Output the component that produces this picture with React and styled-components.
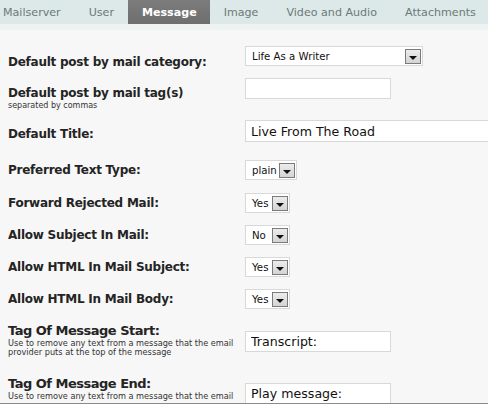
import React from "react";
import styled, { createGlobalStyle } from "styled-components";

const Global = createGlobalStyle`
  html, body { margin: 0; padding: 0; background: #f7f7f7; }
  body { font-family: "DejaVu Sans", Verdana, sans-serif; width: 488px; height: 406px; overflow: hidden; }
`;

const Page = styled.div`
  width: 488px;
  height: 406px;
  display: flex;
  flex-direction: column;
  background: #f7f7f7;
  overflow: hidden;
`;

const TabBar = styled.div`
  height: 24px;
  display: flex;
  align-items: stretch;
  background: #dde9e8;
  border-bottom: 6px solid #eef3f2;
  flex-shrink: 0;
`;

const Tab = styled.div`
  display: flex;
  align-items: center;
  padding: 0 ${(p) => (p.$active ? 13 : 14)}px 0 14px;
  font-size: 11.1px;
  color: ${(p) => (p.$active ? "#ffffff" : "#6b7978")};
  font-weight: ${(p) => (p.$active ? "bold" : "normal")};
  background: ${(p) => (p.$active ? "linear-gradient(#7c7c7c, #6e6e6e)" : "transparent")};
  white-space: nowrap;
  &:first-child {
    padding-left: 3px;
  }
`;

const Form = styled.div`
  padding-top: 16px;
  display: flex;
  flex-direction: column;
  flex: 1;
  overflow: hidden;
`;

const Row = styled.div`
  display: grid;
  grid-template-columns: 237px 1fr;
  padding-left: 8px;
  height: ${(p) => p.$h}px;
  flex-shrink: 0;
`;

const LabelCell = styled.div`
  margin-top: ${(p) => p.$top}px;
  color: #242424;
`;

const Label = styled.div`
  font-size: ${(p) => (p.$big ? 13 : 12)}px;
  letter-spacing: ${(p) => (p.$big ? -0.5 : -0.25)}px;
  font-weight: bold;
  line-height: ${(p) => (p.$big ? 16 : 15)}px;
  white-space: nowrap;
`;

const Help = styled.div`
  font-size: ${(p) => p.$size || 8.2}px;
  line-height: 9px;
  color: #333;
  white-space: nowrap;
`;

const FieldCell = styled.div`
  display: flex;
  align-items: flex-start;
`;

const SelectBox = styled.div`
  box-sizing: border-box;
  width: ${(p) => p.$w}px;
  height: 20px;
  background: #fff;
  border: 1px solid #d8d8d8;
  display: flex;
  align-items: center;
  padding-left: 6px;
  padding-right: 1px;
  font-size: 10.2px;
  color: #111;
`;

const SelectText = styled.span`
  flex: 1;
  white-space: nowrap;
`;

const ArrowButton = styled.span`
  box-sizing: border-box;
  width: 16px;
  height: 15px;
  border: 1px solid #7b7b7b;
  background: linear-gradient(#ececec, #d4d4d4);
  display: flex;
  align-items: flex-end;
  justify-content: center;
  padding-bottom: 3px;
  &::after {
    content: "";
    width: 0;
    height: 0;
    border-left: 4px solid transparent;
    border-right: 4px solid transparent;
    border-top: 4px solid #111;
  }
`;

const TextInput = styled.input`
  box-sizing: border-box;
  width: ${(p) => p.$w}px;
  height: ${(p) => p.$h || 21}px;
  margin: 0;
  background: #fff;
  border: 1px solid #d8d8d8;
  padding: 0 0 0 5px;
  font-family: "DejaVu Sans", Verdana, sans-serif;
  font-size: 12.6px;
  color: #111;
  outline: none;
`;

const BottomLine = styled.div`
  height: 2px;
  border-top: 1px solid #8a8a8a;
  background: #fff;
  flex-shrink: 0;
`;

const Select = ({ w, text }) => (
  <SelectBox $w={w}>
    <SelectText>{text}</SelectText>
    <ArrowButton />
  </SelectBox>
);

const tabs = [
  { t: "Mailserver" },
  { t: "User" },
  { t: "Message", active: true },
  { t: "Image" },
  { t: "Video and Audio" },
  { t: "Attachments" },
];

export default function App() {
  return (
    <Page>
      <Global />
      <TabBar>
        {tabs.map((tb) => (
          <Tab key={tb.t} $active={tb.active}>
            {tb.t}
          </Tab>
        ))}
      </TabBar>
      <Form>
        <Row $h={32}>
          <LabelCell $top={9}>
            <Label>Default post by mail category:</Label>
          </LabelCell>
          <FieldCell>
            <Select w={178} text="Life As a Writer" />
          </FieldCell>
        </Row>
        <Row $h={42}>
          <LabelCell $top={8}>
            <Label>Default post by mail tag(s)</Label>
            <Help $size={8}>separated by commas</Help>
          </LabelCell>
          <FieldCell>
            <TextInput $w={146} defaultValue="" />
          </FieldCell>
        </Row>
        <Row $h={40}>
          <LabelCell $top={7}>
            <Label>Default Title:</Label>
          </LabelCell>
          <FieldCell>
            <TextInput $w={260} $h={22} defaultValue="Live From The Road" />
          </FieldCell>
        </Row>
        <Row $h={33}>
          <LabelCell $top={3}>
            <Label>Preferred Text Type:</Label>
          </LabelCell>
          <FieldCell>
            <Select w={52} text="plain" />
          </FieldCell>
        </Row>
        <Row $h={32}>
          <LabelCell $top={3}>
            <Label>Forward Rejected Mail:</Label>
          </LabelCell>
          <FieldCell>
            <Select w={45} text="Yes" />
          </FieldCell>
        </Row>
        <Row $h={32}>
          <LabelCell $top={3}>
            <Label>Allow Subject In Mail:</Label>
          </LabelCell>
          <FieldCell>
            <Select w={45} text="No" />
          </FieldCell>
        </Row>
        <Row $h={32}>
          <LabelCell $top={3}>
            <Label>Allow HTML In Mail Subject:</Label>
          </LabelCell>
          <FieldCell>
            <Select w={45} text="Yes" />
          </FieldCell>
        </Row>
        <Row $h={42}>
          <LabelCell $top={3}>
            <Label>Allow HTML In Mail Body:</Label>
          </LabelCell>
          <FieldCell>
            <Select w={45} text="Yes" />
          </FieldCell>
        </Row>
        <Row $h={52}>
          <LabelCell $top={-8}>
            <Label $big>Tag Of Message Start:</Label>
            <Help>Use to remove any text from a message that the email</Help>
            <Help>provider puts at the top of the message</Help>
          </LabelCell>
          <FieldCell>
            <TextInput $w={146} defaultValue="Transcript:" />
          </FieldCell>
        </Row>
        <Row $h={20}>
          <LabelCell $top={-7}>
            <Label $big>Tag Of Message End:</Label>
            <Help>Use to remove any text from a message that the email</Help>
          </LabelCell>
          <FieldCell>
            <TextInput $w={146} defaultValue="Play message:" />
          </FieldCell>
        </Row>
      </Form>
      <BottomLine />
    </Page>
  );
}
